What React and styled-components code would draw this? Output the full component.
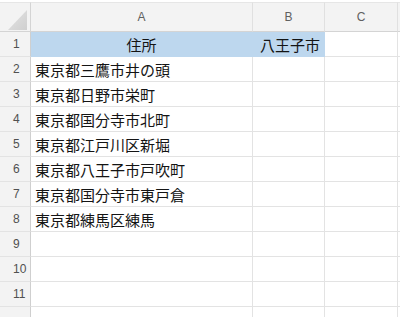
import React from "react";
import styled, { createGlobalStyle } from "styled-components";

const GlobalStyle = createGlobalStyle`
  body {
    margin: 0;
    background: #ffffff;
    overflow: hidden;
  }
`;

const Sheet = styled.div`
  padding-top: 2px;
  display: grid;
  grid-template-columns: 31px 222px 72px 73px 60px;
  grid-auto-rows: 25px;
  grid-template-rows: 30px;
  font-family: "Noto Sans CJK JP", "Noto Sans", sans-serif;
`;

const Corner = styled.div`
  position: relative;
  background: #f3f3f3;
  border-top: 1px solid #e6e6e6;
  border-right: 1px solid #d4d4d4;
  border-bottom: 1px solid #d4d4d4;

  &::after {
    content: "";
    position: absolute;
    left: 8px;
    top: 7px;
    width: 19px;
    height: 20px;
    background: linear-gradient(135deg, #e4e4e4, #cfcfcf);
    clip-path: polygon(100% 0, 100% 100%, 0 100%);
  }
`;

const ColHead = styled.div`
  display: flex;
  align-items: center;
  justify-content: center;
  background: #f3f3f3;
  border-top: 1px solid #e6e6e6;
  border-right: 1px solid #e0e0e0;
  border-bottom: 1px solid #d4d4d4;
  color: #606060;
  font-family: "Liberation Sans", "Noto Sans", sans-serif;
  font-size: 12px;
`;

const RowHead = styled.div`
  display: flex;
  align-items: center;
  padding-left: 13px;
  background: #f3f3f3;
  border-right: 1px solid #cfcfcf;
  border-bottom: 1px solid #e3e3e3;
  color: #505050;
  font-family: "Liberation Sans", "Noto Sans", sans-serif;
  font-size: 12px;
`;

const Cell = styled.div`
  display: flex;
  align-items: center;
  justify-content: ${(p) => p.$align || "flex-start"};
  padding: 0 4px;
  background: ${(p) => (p.$sel ? "#bdd7ee" : "#ffffff")};
  border-right: 1px solid ${(p) => (p.$sel ? "#bdd7ee" : "#e3e3e3")};
  border-bottom: 1px solid ${(p) => (p.$sel ? "#bdd7ee" : "#e3e3e3")};
  color: #141414;
  font-size: 15px;
  white-space: nowrap;
  overflow: hidden;
`;

const addresses = [
  "東京都三鷹市井の頭",
  "東京都日野市栄町",
  "東京都国分寺市北町",
  "東京都江戸川区新堀",
  "東京都八王子市戸吹町",
  "東京都国分寺市東戸倉",
  "東京都練馬区練馬",
];

const App = () => {
  const rows = [];
  for (let i = 1; i <= 12; i++) {
    let a = null;
    let b = null;
    if (i === 1) {
      a = <Cell $sel $align="center">住所</Cell>;
      b = <Cell $sel $align="flex-end">八王子市</Cell>;
    } else {
      a = <Cell>{addresses[i - 2] || ""}</Cell>;
      b = <Cell />;
    }
    rows.push(
      <React.Fragment key={i}>
        {/* row 12 sits below the fold, its number is not visible */}
        <RowHead>{i < 12 ? i : ""}</RowHead>
        {a}
        {b}
        <Cell />
        <Cell />
      </React.Fragment>
    );
  }

  return (
    <>
      <GlobalStyle />
      <Sheet>
        <Corner />
        <ColHead>A</ColHead>
        <ColHead>B</ColHead>
        <ColHead>C</ColHead>
        <ColHead />
        {rows}
      </Sheet>
    </>
  );
};

export default App;
